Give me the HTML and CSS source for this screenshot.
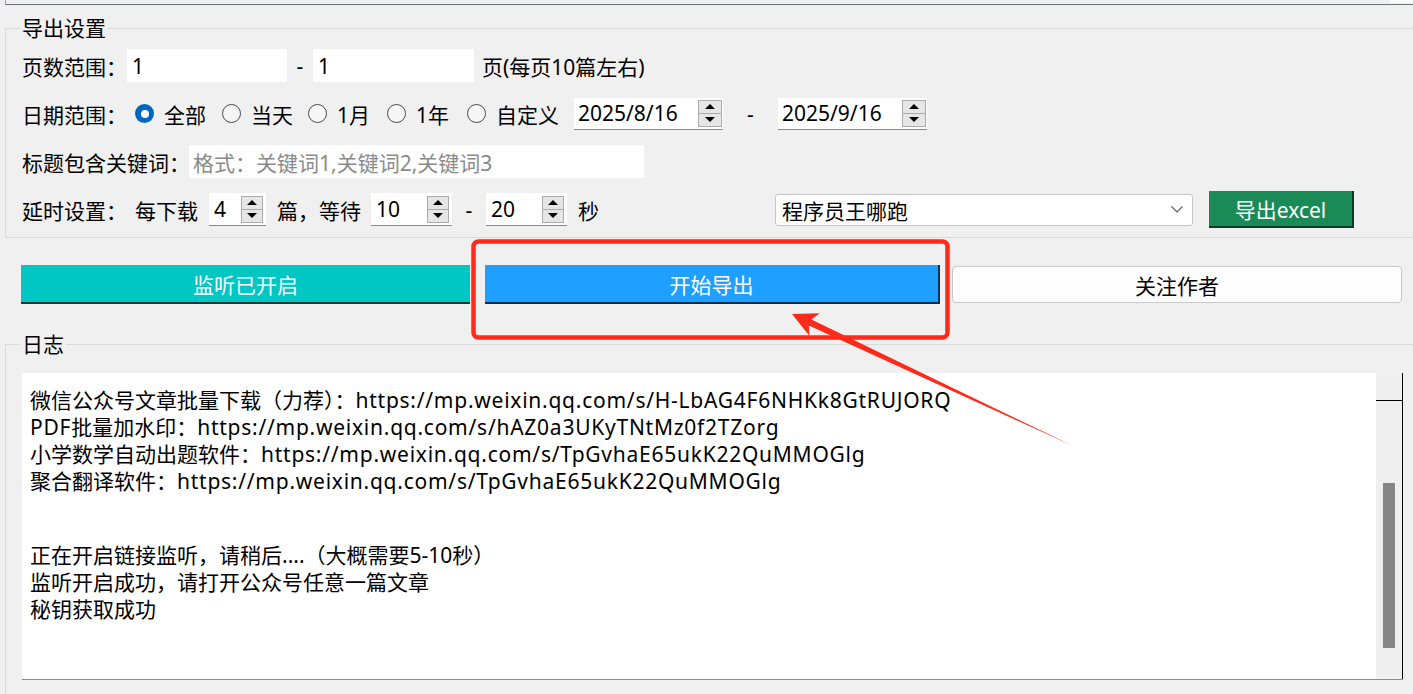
FILE: index.html
```html
<!DOCTYPE html>
<html lang="zh-CN">
<head>
<meta charset="utf-8">
<title>导出设置</title>
<link rel="stylesheet" href="styles.css">
</head>
<body>
<div class="topbar"><div class="topbar-white"></div></div>

<fieldset class="group settings">
  <legend>导出设置</legend>

  <div class="row">
    <span class="lbl w105">页数范围：</span>
    <div class="field w160">1</div>
    <span class="dash w26">-</span>
    <div class="field w161">1</div>
    <span class="suffix">页(每页10篇左右)</span>
  </div>

  <div class="row">
    <span class="lbl w113">日期范围：</span>
    <label class="opt w87"><span class="radio checked"></span>全部</label>
    <label class="opt w86"><span class="radio"></span>当天</label>
    <label class="opt w79"><span class="radio"></span>1月</label>
    <label class="opt w80"><span class="radio"></span>1年</label>
    <label class="opt w107"><span class="radio"></span>自定义</label>
    <div class="date">
      <span>2025/8/16</span>
      <span class="spin-btns date-btns"><span><i class="up"></i></span><span><i class="down"></i></span></span>
    </div>
    <span class="dash w55">-</span>
    <div class="date">
      <span>2025/9/16</span>
      <span class="spin-btns date-btns"><span><i class="up"></i></span><span><i class="down"></i></span></span>
    </div>
  </div>

  <div class="row">
    <span class="lbl w167">标题包含关键词：</span>
    <div class="field kw">格式：关键词1,关键词2,关键词3</div>
  </div>

  <div class="row">
    <span class="lbl w113">延时设置：</span>
    <span class="lbl w74">每下载</span>
    <div class="spin w57"><span>4</span><span class="spin-btns"><span><i class="up"></i></span><span><i class="down"></i></span></span></div>
    <span class="lbl w94 ml11">篇，等待</span>
    <div class="spin w81"><span>10</span><span class="spin-btns"><span><i class="up"></i></span><span><i class="down"></i></span></span></div>
    <span class="dash w34">-</span>
    <div class="spin w81"><span>20</span><span class="spin-btns"><span><i class="up"></i></span><span><i class="down"></i></span></span></div>
    <span class="lbl w21 ml11">秒</span>
    <div class="combo">
      <span>程序员王哪跑</span>
      <svg class="chev" width="12" height="7" viewBox="0 0 12 7"><polyline points="0.5,0.5 6,6 11.5,0.5" fill="none" stroke="#5f5f5f" stroke-width="1.2"/></svg>
    </div>
    <div class="btn-excel">导出excel</div>
  </div>
</fieldset>

<div class="btn-row">
  <div class="btn btn-teal">监听已开启</div>
  <div class="btn btn-blue">开始导出</div>
  <div class="btn btn-white">关注作者</div>
</div>

<fieldset class="group logs">
  <legend>日志</legend>
  <div class="log">
    <div class="log-text">
      <div>微信公众号文章批量下载（力荐）：<span class="url">https://mp.weixin.qq.com/s/H-LbAG4F6NHKk8GtRUJORQ</span></div>
      <div><span class="url">PDF</span>批量加水印：<span class="url">https://mp.weixin.qq.com/s/hAZ0a3UKyTNtMz0f2TZorg</span></div>
      <div>小学数学自动出题软件：<span class="url">https://mp.weixin.qq.com/s/TpGvhaE65ukK22QuMMOGlg</span></div>
      <div>聚合翻译软件：<span class="url">https://mp.weixin.qq.com/s/TpGvhaE65ukK22QuMMOGlg</span></div>
      <div class="blank"></div>
      <div>正在开启链接监听，请稍后....（大概需要5-10秒）</div>
      <div>监听开启成功，请打开公众号任意一篇文章</div>
      <div>秘钥获取成功</div>
    </div>
    <div class="scrollbar">
      <div class="sb-top"></div>
      <div class="sb-thumb"></div>
    </div>
  </div>
</fieldset>

<svg class="annot" width="1413" height="694" viewBox="0 0 1413 694">
  <rect x="473.5" y="241.5" width="474" height="96" rx="5" fill="none" stroke="#fe2a1a" stroke-width="4.5"/>
  <polygon points="792,314 819.7,313.2 811.4,319.6 1073,446 808.8,325.4 809.5,336" fill="#fe2a1a"/>
</svg>
</body>
</html>
```

FILE: styles.css
```css
* { box-sizing: border-box; }
html, body { margin: 0; padding: 0; }
body {
  position: relative;
  width: 1413px;
  height: 694px;
  overflow: hidden;
  background: #f0f0f0;
  color: #000;
  font-family: "Noto Sans", "Noto Sans CJK SC", sans-serif;
  font-size: 21px;
}

.topbar {
  margin-left: 5px;
  height: 5px;
  border-left: 1px solid #9a9a9a;
  border-bottom: 1px solid #6e747a;
  display: flex;
  justify-content: flex-end;
}
.topbar-white { width: 22px; height: 3px; background: #fff; }

.group {
  margin: 9px 0 0 5px;
  border: 1px solid #dadada;
  border-right: none;
  min-width: 0;
}
.group legend {
  margin-left: -2px;
  padding: 0 2px;
  line-height: 28px;
  font-size: 21px;
}
.settings { padding: 7px 0 11px 16px; }

.row { display: flex; align-items: center; height: 33px; white-space: nowrap; }
.row + .row { margin-top: 15px; }

.lbl { flex: none; }
.w21 { width: 21px; } .w74 { width: 74px; } .w94 { width: 94px; }
.w105 { width: 105px; } .w113 { width: 113px; } .w167 { width: 167px; }
.ml11 { margin-left: 11px; }

.field {
  flex: none;
  height: 33px;
  background: #fff;
  display: flex;
  align-items: center;
  padding-left: 5px;
}
.w160 { width: 160px; } .w161 { width: 161px; }
.kw { width: 455px; padding-left: 4px; color: #8a8a8a; }

.dash { flex: none; text-align: center; }
.w26 { width: 26px; } .w34 { width: 34px; } .w55 { width: 55px; }
.suffix { margin-left: 8px; }

.opt { flex: none; display: flex; align-items: center; }
.w87 { width: 87px; } .w86 { width: 86px; } .w79 { width: 79px; }
.w80 { width: 80px; } .w107 { width: 107px; }
.radio {
  width: 19px; height: 19px;
  margin-right: 10px;
  border-radius: 50%;
  border: 1px solid #4a4a4a;
  background: #f6f6f6;
  display: flex; align-items: center; justify-content: center;
}
.radio.checked { border: none; background: #0067c0; }
.radio.checked::after {
  content: "";
  width: 8px; height: 8px;
  border-radius: 50%;
  background: #fff;
}

.date {
  flex: none;
  width: 149px;
  height: 32px;
  background: #fff;
  border-bottom: 1px solid #8a8a8a;
  display: flex;
  align-items: center;
  justify-content: space-between;
  padding: 0 1px 0 4px;
}
.spin {
  flex: none;
  height: 33px;
  background: #fff;
  border-bottom: 1px solid #8a8a8a;
  display: flex;
  align-items: center;
  justify-content: space-between;
  padding: 0 3px 0 5px;
}
.w57 { width: 57px; } .w81 { width: 81px; }

.spin-btns {
  width: 22px;
  height: 27px;
  display: flex;
  flex-direction: column;
  border: 1px solid #ababab;
  background: #e6e6e6;
}
.date-btns { width: 24px; }
.spin-btns > span {
  flex: 1;
  display: flex;
  align-items: center;
  justify-content: center;
}
.spin-btns > span + span { border-top: 1px solid #ababab; }
.up, .down { display: block; width: 0; height: 0; border-left: 5px solid transparent; border-right: 5px solid transparent; }
.up { border-bottom: 5px solid #000; }
.down { border-top: 5px solid #000; }

.combo {
  flex: none;
  margin-left: 176px;
  width: 418px;
  height: 32px;
  background: #fff;
  border: 1px solid #c6c6c6;
  border-radius: 3px;
  display: flex;
  align-items: center;
  justify-content: space-between;
  padding: 0 9px 0 6px;
}
.chev { display: block; }

.btn-excel {
  flex: none;
  margin-left: 16px;
  width: 145px;
  height: 37px;
  background: #1a8a57;
  color: #fff;
  border-right: 2px solid #0b3b25;
  border-bottom: 2px solid #0b3b25;
  display: flex;
  align-items: center;
  justify-content: center;
}

.btn-row {
  display: flex;
  margin-top: 27px;
  padding-left: 21px;
  height: 39px;
}
.btn {
  flex: none;
  height: 39px;
  display: flex;
  align-items: center;
  justify-content: center;
  color: #fff;
}
.btn-teal { width: 449px; background: #00c6c4; border-bottom: 2px solid #0e3b3a; }
.btn-blue {
  margin-left: 15px;
  width: 455px;
  background: #1f9fff;
  border-bottom: 2px solid #0b2e4b;
  border-right: 2px solid #0b2e4b;
}
.btn-white {
  margin: 1px 0 0 12px;
  width: 450px;
  height: 37px;
  background: #fdfdfd;
  border: 1px solid #c9c9c9;
  border-radius: 4px;
  color: #000;
}

.logs {
  margin-top: 26px;
  padding: 15px 0 40px 16px;
  border-bottom: none;
}
.log {
  display: flex;
  width: 1381px;
  height: 307px;
  border-bottom: 1px solid #8c8c8c;
}
.log-text {
  flex: 1;
  background: #fff;
  padding: 14px 0 0 8px;
  line-height: 27px;
  white-space: nowrap;
}
.log-text .url { letter-spacing: 0.75px; }
.log-text .blank { height: 47px; }
.scrollbar {
  flex: none;
  width: 27px;
  background: #efefef;
  border-right: 1px solid #000;
}
.sb-top { height: 28px; border-bottom: 1px solid #000; }
.sb-thumb {
  margin: 82px 0 0 7px;
  width: 12px;
  height: 165px;
  background: #858585;
}

.annot {
  position: absolute;
  left: 0;
  top: 0;
  pointer-events: none;
}
```
